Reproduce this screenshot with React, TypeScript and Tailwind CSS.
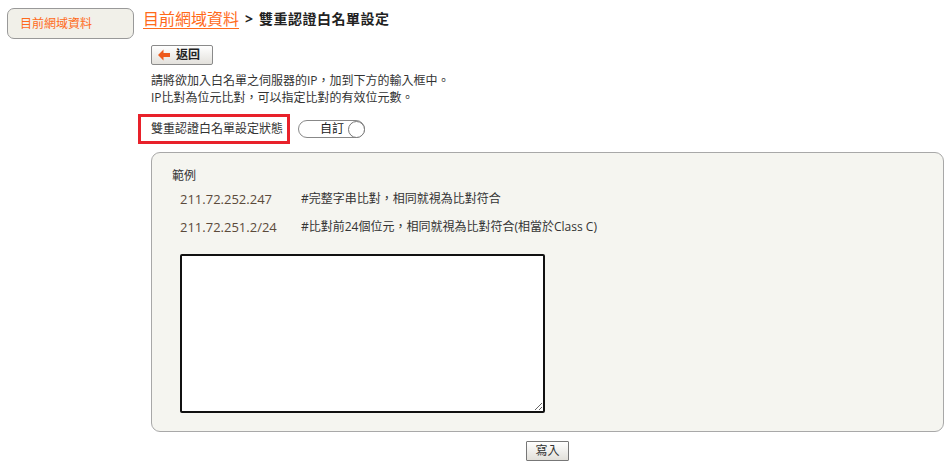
import React from 'react';

const font = "font-['Segoe_UI','Open_Sans','Noto_Sans_CJK_TC',sans-serif]";

const App: React.FC = () => {
  return (
    <div className={`w-[949px] h-[466px] bg-white flex text-[12px] text-[#333] ${font}`}>
      <aside className="w-[151px] shrink-0 pl-[7px] pt-[8px]">
        <div className="w-[127px] h-[31px] rounded-[7px] border border-[#999] bg-[#f1f0e9] flex items-center pl-[12px] text-[#ff6a1a]">
          目前網域資料
        </div>
      </aside>

      <main className="flex-1 pr-[5px]">
        <div className="h-[38px] flex items-center ml-[-8px] pb-[1px]">
          <a className="text-[16px] text-[#ff6a1a] underline underline-offset-[3px] decoration-1 leading-none">目前網域資料</a>
          <span className="ml-[6px] text-[14px] font-bold text-[#222] leading-none">&gt;</span>
          <span className="ml-[6px] text-[14px] font-bold text-[#222] leading-none tracking-[0.5px]">雙重認證白名單設定</span>
        </div>

        <button className="mt-[7px] h-[20px] w-[62px] flex items-center gap-[5px] pl-[5px] border border-[#8a8a8a] rounded-[2px] bg-gradient-to-b from-white to-[#e3e1dc] text-[12px] text-[#222]">
          <svg width="14" height="12" viewBox="0 0 14 12">
            <path d="M6.5 0.5 L1 6 L6.5 11.5 L6.5 8 L13 8 L13 4 L6.5 4 Z" fill="#ee5a1c" />
          </svg>
          <span className="font-bold leading-none">返回</span>
        </button>

        <div className="mt-[7px] leading-[17px] text-[#333]">
          <p>請將欲加入白名單之伺服器的IP，加到下方的輸入框中。</p>
          <p>IP比對為位元比對，可以指定比對的有效位元數。</p>
        </div>

        <div className="mt-[8px] flex items-center">
          <div className="ml-[-13px] w-[152px] h-[30px] border-[3px] border-[#e8212a] flex items-center pl-[10px] text-[#333]">
            雙重認證白名單設定狀態
          </div>
          <div className="ml-[8px] w-[67px] h-[18px] rounded-full border border-[#888] flex items-center justify-end">
            <span className="mr-[4px] text-[#222]">自訂</span>
            <span className="w-[17px] h-[17px] rounded-full border border-[#777] bg-white -mr-[1px]" />
          </div>
        </div>

        <section className="mt-[8px] h-[280px] rounded-[9px] border border-[#a8a8a8] bg-[#f5f5f0] pl-[20px] pt-[14px]">
          <p className="text-[#333]">範例</p>
          <div className="mt-[5px] pl-[8px] flex text-[13px] text-[#5b4a3a]">
            <span className="w-[121px]">211.72.252.247</span>
            <span className="text-[12px] text-[#333]">#完整字串比對，相同就視為比對符合</span>
          </div>
          <div className="mt-[8px] pl-[8px] flex text-[13px] text-[#5b4a3a]">
            <span className="w-[121px]">211.72.251.2/24</span>
            <span className="text-[12px] text-[#333]">#比對前24個位元，相同就視為比對符合(相當於Class C)</span>
          </div>
          <textarea
            className="mt-[17px] ml-[8px] block w-[365px] h-[159px] border-2 border-[#111] rounded-[2px] bg-white resize"
            defaultValue=""
          />
        </section>

        <div className="mt-[9px] flex justify-center">
          <button className="w-[43px] h-[20px] border border-[#777] rounded-[1px] bg-gradient-to-b from-white to-[#e2e0da] text-[12px] text-[#333]">
            寫入
          </button>
        </div>
      </main>
    </div>
  );
};

export default App;
